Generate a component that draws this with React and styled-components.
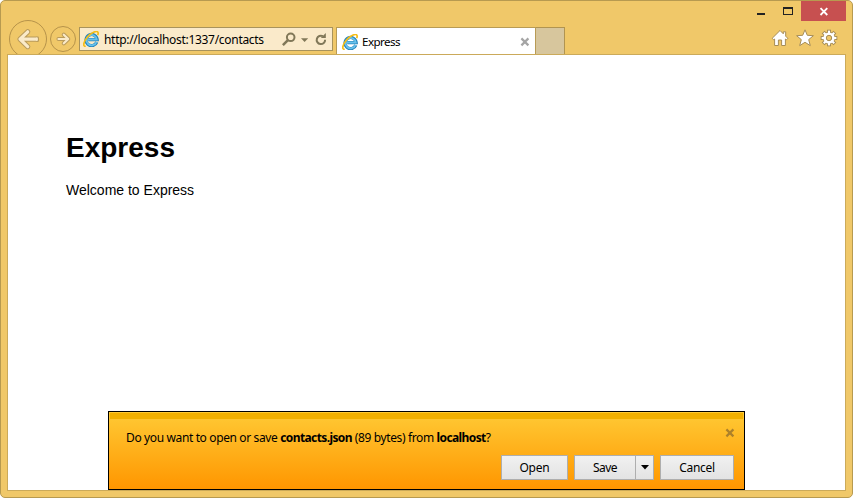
import React from 'react';
import styled, { createGlobalStyle } from 'styled-components';

const GlobalStyle = createGlobalStyle`
  * { box-sizing: border-box; }
  body { margin: 0; background: #fff; overflow: hidden; }
  svg { display: block; flex: none; }
`;

const uiFont = '"Noto Sans", "Open Sans", sans-serif';

const Window = styled.div`
  display: flex;
  flex-direction: column;
  width: 853px;
  height: 498px;
  padding: 0 6px;
  background: #f0c869;
  border: 1px solid #b79a50;
  border-radius: 5px;
`;

const TitleBar = styled.header`
  display: flex;
  justify-content: flex-end;
  height: 20px;
`;

const CaptionIcons = styled.div`
  width: 60px;
  height: 20px;
`;

const CloseWindow = styled.button`
  display: flex;
  width: 45px;
  height: 20px;
  padding: 0;
  border: 0;
  background: #c75050;
`;

const NavBar = styled.nav`
  display: flex;
  align-items: flex-start;
  height: 33px;
  padding-top: 6px;
`;

const NavArrows = styled.div`
  width: 72px;
  height: 35px;
  margin-top: -8px;
`;

const AddressBar = styled.div`
  display: flex;
  align-items: center;
  width: 254px;
  height: 24px;
  padding-left: 3px;
  border: 1px solid #a8935c;
  background: #faeaca;
`;

const Label = styled.span`
  display: block;
  width: ${p => p.$width}px;
  font: ${p => p.$size || 12}px/16px ${uiFont};
  letter-spacing: ${p => p.$spacing || 0}px;
  white-space: nowrap;
  color: #000;
`;

const AddressText = styled(Label)`
  margin: 2px 0 0 5px;
`;

const Strong = styled.b`
  letter-spacing: -0.6px;
`;

const Tab = styled.div`
  display: flex;
  align-items: center;
  width: 200px;
  height: 27px;
  margin-left: 3px;
  padding: 1px 5px 0 5px;
  background: #fff;
  border: 1px solid #b89b55;
  border-bottom: 0;
`;

const TabLabel = styled(Label)`
  flex: 1;
  margin-left: 4px;
`;

const NewTab = styled.div`
  width: 29px;
  height: 27px;
  background: #d7c69d;
  border: 1px solid #b19450;
  border-left: 0;
  border-bottom: 0;
`;

const Toolbar = styled.div`
  display: flex;
  gap: 6.5px;
  margin: 2px 8px 0 auto;
`;

const Page = styled.main`
  display: flex;
  flex-direction: column;
  width: 839px;
  height: 437px;
  padding-left: 58px;
  border: 1px solid #cbaa5a;
  background: #fff;
  font-family: "Liberation Sans", Arial, sans-serif;
`;

const Heading = styled.h1`
  margin: 76px 0 0;
  font-size: 28px;
  line-height: 34px;
  color: #000;
`;

const Paragraph = styled.p`
  margin: 16px 0 0;
  font-size: 14px;
  line-height: 18px;
`;

const Notification = styled.section`
  width: 637px;
  height: 79px;
  margin: auto 0 0 42px;
  border: 1px solid #000;
  background: linear-gradient(#ffca35, #ff9600);
`;

const NotificationBand = styled.div`
  height: 6px;
  margin: 1px 1px 0;
  background: #f2b000;
`;

const MessageRow = styled.div`
  display: flex;
  justify-content: space-between;
  height: 29px;
  padding: 11px 9px 0 17px;
`;

const CloseMark = styled.span`
  display: block;
  margin-top: ${p => p.$top || 0}px;
`;

const Actions = styled.div`
  display: flex;
  justify-content: flex-end;
  gap: 6px;
  margin-top: 7px;
  padding-right: 10px;
`;

const SplitButton = styled.div`
  display: flex;
`;

const Button = styled.button`
  display: flex;
  align-items: center;
  justify-content: center;
  width: ${p => p.$width}px;
  height: 25px;
  padding: 0;
  border: 1px solid #aeaeae;
  border-left-width: ${p => (p.$joined ? 0 : 1)}px;
  background: linear-gradient(#f1f1f1, #e3e3e3);
  font: 12px/16px ${uiFont};
  letter-spacing: ${p => p.$spacing || 0}px;
  color: #000;
`;

function BrowserLogo() {
  return (
    <svg width="16" height="16" viewBox="0 0 16 16" fill="none">
      <path d="M13.8 11.2A5.6 5.6 0 1 1 14.2 8.7H5.2" stroke="#2583bb" strokeWidth="3.2" />
      <path d="M13.5 11A5.2 5.2 0 1 1 13.8 8.5H5" stroke="#68c2ec" strokeWidth="1.8" />
      <path d="M2.7 15.2C-.6 15.9.6 10.4 4.5 6 8.4 1.7 13.5-.6 14.8 1.1c.6.7.4 1.8-.1 3" stroke="#f5bd17" strokeWidth="1.7" />
    </svg>
  );
}

function Cross({ color }) {
  return (
    <svg width="10" height="10" viewBox="0 0 10 10">
      <path d="M1.4 1.4 8.4 8.4M8.4 1.4 1.4 8.4" stroke={color} strokeWidth="2.2" />
    </svg>
  );
}

function Arrows() {
  return (
    <svg width="72" height="35" viewBox="7 19 72 35" fill="none">
      <g stroke="#b6934a">
        <circle cx="28" cy="39" r="18.5" />
        <circle cx="63" cy="39" r="12.5" />
      </g>
      <g strokeLinecap="round" strokeLinejoin="round">
        <g stroke="#b99b5b">
          <path d="M27.7 31.8 20 39.2 27.7 46.6M20.5 39.2H36.5" strokeWidth="5.2" />
          <path d="M36.5 36.6h2.1v5.2h-2.1Z" fill="#b99b5b" stroke="none" />
          <path d="M63.8 34.7 68.2 39 63.8 43.3M68 39H58.5" strokeWidth="4.1" />
        </g>
        <g stroke="#faeac9">
          <path d="M27.7 31.8 20 39.2 27.7 46.6M20.5 39.2H36.2" strokeWidth="3.2" />
          <path d="M36 37.6h1.7v3.2H36Z" fill="#faeac9" stroke="none" />
          <path d="M63.8 34.7 68.2 39 63.8 43.3M68 39H58.5" strokeWidth="2.2" />
        </g>
      </g>
    </svg>
  );
}

function AddressIcons() {
  return (
    <svg width="50" height="22" viewBox="280 28 50 22" fill="none" stroke="#817858">
      <circle cx="290.7" cy="37.3" r="3.8" strokeWidth="2" />
      <path d="m287.9 40.1-5 5" strokeWidth="2.5" />
      <path d="M301 38.3h7.2L304.6 42Z" fill="#817858" stroke="none" />
      <path d="M322.9 36.2A4.2 4.2 0 1 0 325.1 39.7" strokeWidth="2" />
      <path d="M320.8 38h5V33Z" fill="#817858" stroke="none" />
    </svg>
  );
}

function HomeIcon() {
  return (
    <svg width="18" height="18" viewBox="0 0 18 18">
      <path d="M9 1.5 1.2 9.3l1.4 1.5 1-.8v6.5h3.8V11h3.2v5.5h3.8V10l1 .8 1.4-1.5-2.1-2.1V2.8h-2.4v2Z" fill="#fff" stroke="#a68d57" />
    </svg>
  );
}

function StarIcon() {
  return (
    <svg width="18" height="18" viewBox="0 0 18 18">
      <path d="m9 .8 2.3 5.5 6.1.4-4.7 3.9 1.6 6L9 13.3l-5.3 3.3 1.6-6L.6 6.7l6.1-.4Z" fill="#fff" stroke="#a68d57" />
    </svg>
  );
}

function GearIcon() {
  const teeth = [0, 45, 90, 135];
  return (
    <svg width="18" height="18" viewBox="0 0 18 18" fill="none">
      <g stroke="#a68d57" strokeWidth="4">
        {teeth.map(a => <path key={a} d="M9 .7V17.3" transform={`rotate(${a} 9 9)`} />)}
        <circle cx="9" cy="9" r="4.3" />
      </g>
      <g stroke="#fff" strokeWidth="2.1">
        {teeth.map(a => <path key={a} d="M9 1.6V16.4" transform={`rotate(${a} 9 9)`} />)}
        <circle cx="9" cy="9" r="4.1" strokeWidth="3" />
      </g>
      <circle cx="9" cy="9" r="2.7" fill="#f0c869" stroke="#a68d57" />
    </svg>
  );
}

export default function App() {
  return (
    <>
      <GlobalStyle />
      <Window>
        <TitleBar>
          <CaptionIcons>
            <svg width="60" height="20" viewBox="741 1 60 20">
              <path d="M757 13h8v2h-8z" fill="#222" />
              <path d="M783 7h10v8h-10zM784 9v5h8V9z" fill="#222" fillRule="evenodd" />
            </svg>
          </CaptionIcons>
          <CloseWindow aria-label="Close window">
            <svg width="45" height="20" viewBox="801 1 45 20">
              <path d="m820.5 8.2 6.8 6.8m0-6.8-6.8 6.8" stroke="#fff" strokeWidth="1.8" />
            </svg>
          </CloseWindow>
        </TitleBar>
        <NavBar>
          <NavArrows><Arrows /></NavArrows>
          <AddressBar>
            <BrowserLogo />
            <AddressText $width={176} $spacing={-0.3}>http://localhost:1337/contacts</AddressText>
            <AddressIcons />
          </AddressBar>
          <Tab>
            <BrowserLogo />
            <TabLabel $size={11.6} $spacing={-0.55}>Express</TabLabel>
            <CloseMark><Cross color="#a5a5a5" /></CloseMark>
          </Tab>
          <NewTab />
          <Toolbar>
            <HomeIcon />
            <StarIcon />
            <GearIcon />
          </Toolbar>
        </NavBar>
        <Page>
          <Heading>Express</Heading>
          <Paragraph>Welcome to Express</Paragraph>
          <Notification>
            <NotificationBand />
            <MessageRow>
              <Label $spacing={-0.37}>
                Do you want to open or save <Strong>contacts.json</Strong> (89 bytes) from <Strong>localhost</Strong>?
              </Label>
              <CloseMark $top={-2}><Cross color="#ad812a" /></CloseMark>
            </MessageRow>
            <Actions>
              <Button $width={67} $spacing={-0.2}>Open</Button>
              <SplitButton>
                <Button $width={62} $spacing={-0.5}>Save</Button>
                <Button $width={18} $joined aria-label="Save options">
                  <svg width="8" height="5" viewBox="0 0 8 5"><path d="M0 0h8L4 4.5Z" /></svg>
                </Button>
              </SplitButton>
              <Button $width={74} $spacing={-0.3}>Cancel</Button>
            </Actions>
          </Notification>
        </Page>
      </Window>
    </>
  );
}
